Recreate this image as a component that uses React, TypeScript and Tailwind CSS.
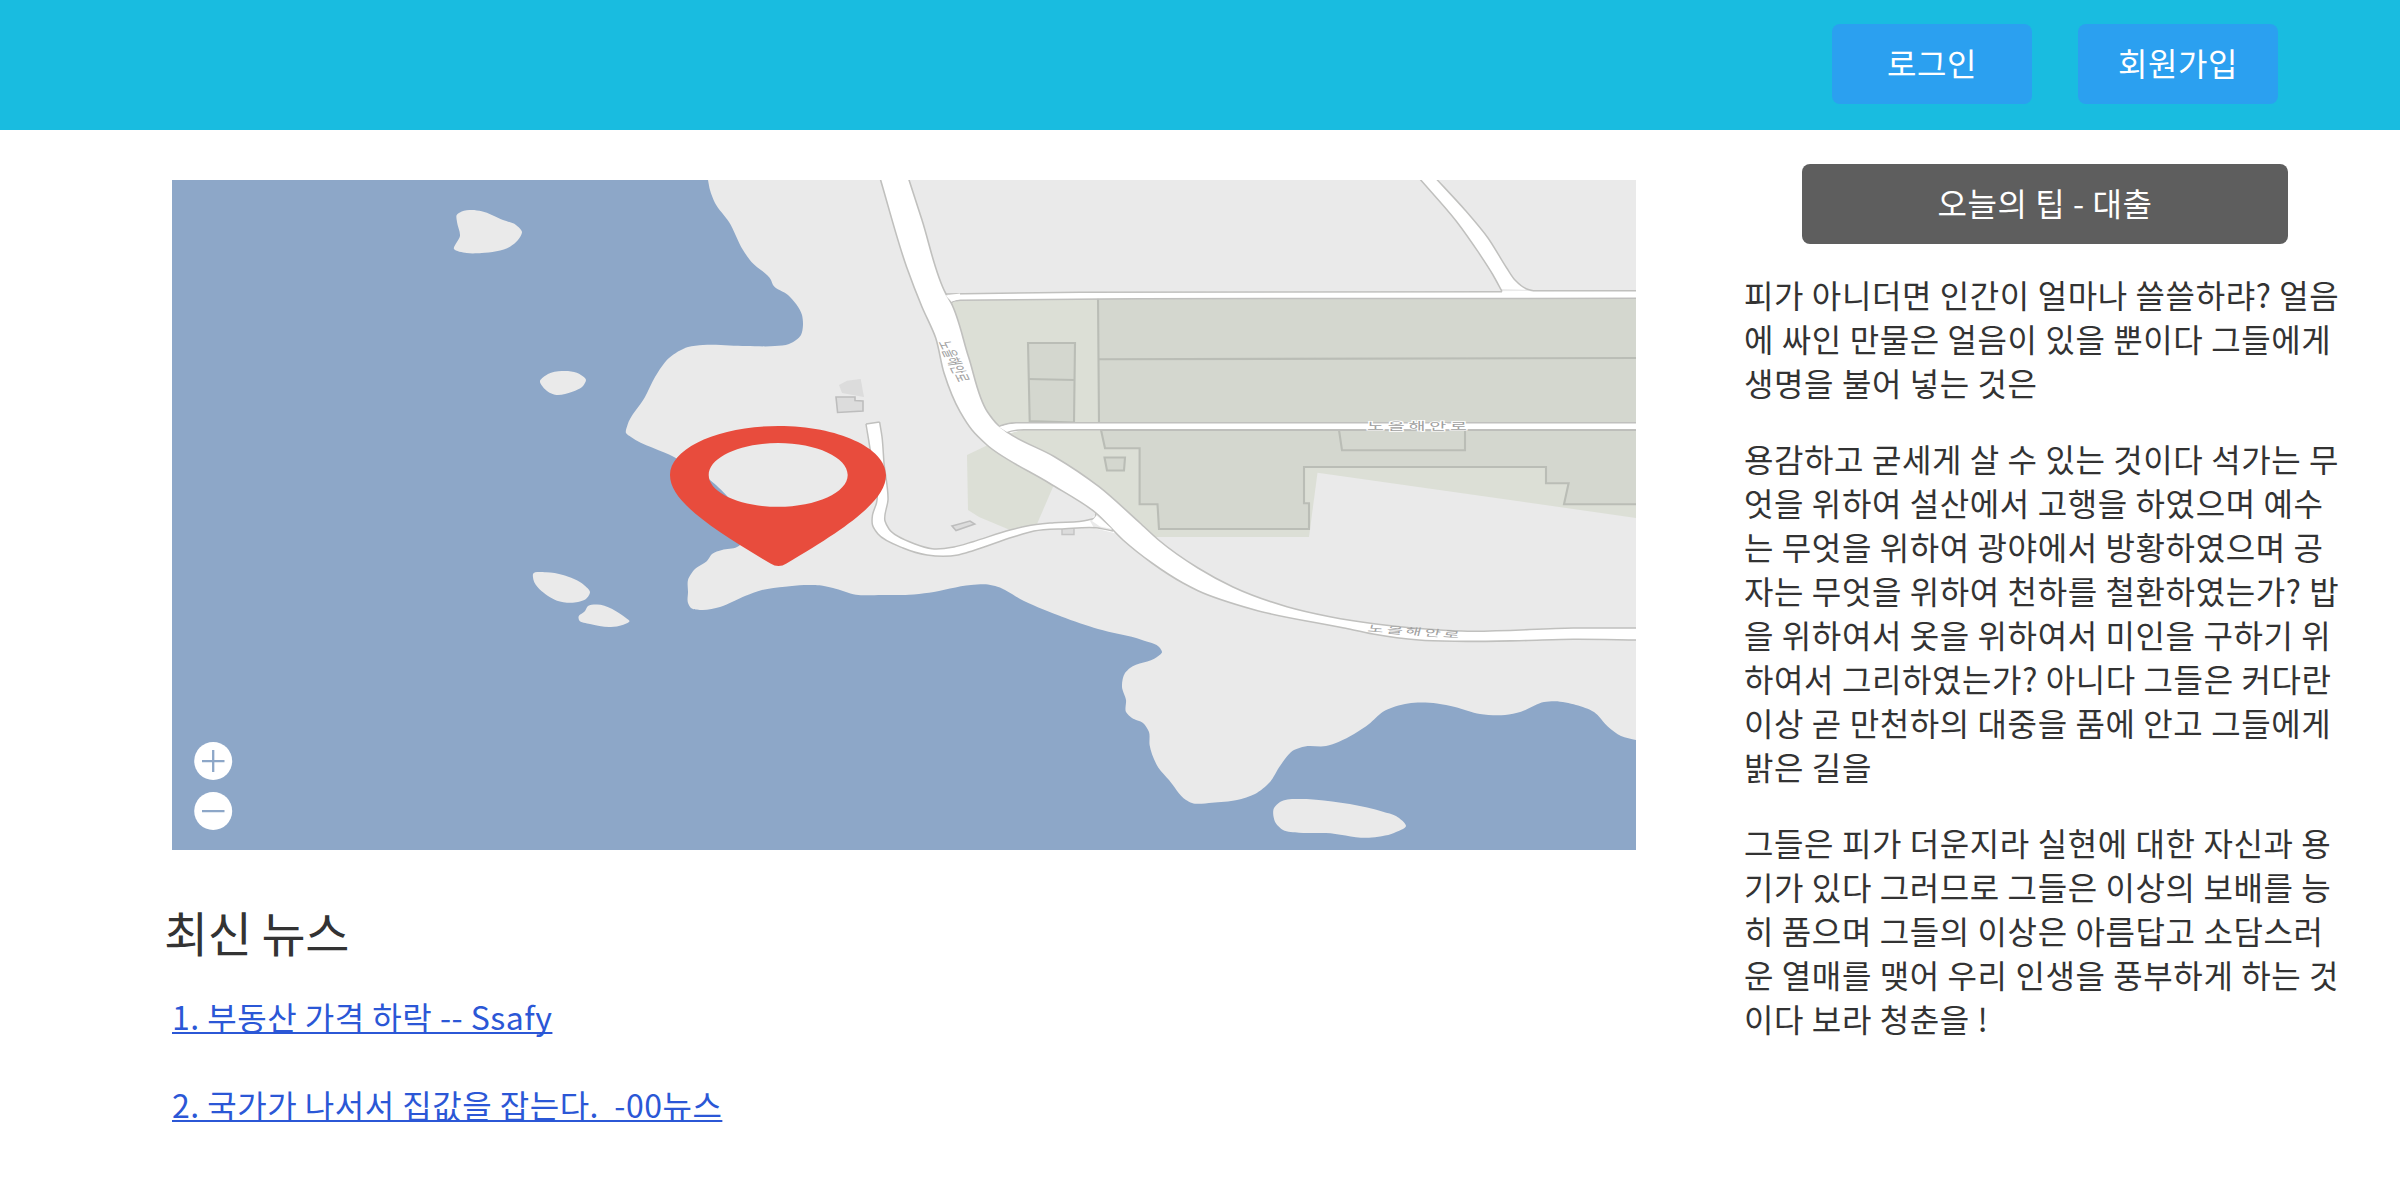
import React from "react";

type Point = [number, number];

/** Builds a smooth cubic path through the points, with tangents weighted by segment length. */
function smooth(points: Point[], closed = false): string {
  const n = points.length;
  const at = (i: number): Point =>
    closed ? points[(i + n) % n] : points[Math.max(0, Math.min(n - 1, i))];
  const dist = (p: Point, q: Point) => Math.hypot(q[0] - p[0], q[1] - p[1]);
  const tangent = (i: number): Point => {
    const a = at(i - 1);
    const b = at(i);
    const c = at(i + 1);
    const ab = dist(a, b);
    const bc = dist(b, c);
    if (!ab) return [(c[0] - b[0]) / bc, (c[1] - b[1]) / bc];
    if (!bc) return [(b[0] - a[0]) / ab, (b[1] - a[1]) / ab];
    const f = (k: 0 | 1) =>
      (((b[k] - a[k]) / ab) * bc + ((c[k] - b[k]) / bc) * ab) / (ab + bc);
    return [f(0), f(1)];
  };
  let d = `M${points[0][0]} ${points[0][1]}`;
  const last = closed ? n : n - 1;
  for (let i = 0; i < last; i++) {
    const b = at(i);
    const c = at(i + 1);
    const s = dist(b, c) / 3.4;
    const t = tangent(i);
    const u = tangent(i + 1);
    d += `C${b[0] + t[0] * s} ${b[1] + t[1] * s} ${c[0] - u[0] * s} ${c[1] - u[1] * s} ${c[0]} ${c[1]}`;
  }
  return closed ? d + "Z" : d;
}

/** Joins two road edges into one closed outline. */
function band(a: Point[], b: Point[]): string {
  return smooth(a) + smooth([...b].reverse()).replace("M", "L") + "Z";
}

const coast: Point[] = [
  [708, 180], [710, 190], [715, 203], [729, 222], [743, 250], [751.5, 262], [771, 280], [773, 285],
  [788, 295], [802, 315], [803, 325], [801, 335], [789, 344], [775, 346], [746, 346], [703, 345],
  [688, 347], [669, 358], [655, 377], [645, 397], [627.5, 425], [626, 433], [631, 437], [674, 457],
  [710, 480], [727, 496], [742, 520], [745, 540], [737, 547], [722, 550], [712, 554], [707, 561],
  [695, 569], [688, 580], [688, 592], [688, 603], [691, 608], [701, 610], [720, 607], [745, 596], [762, 590],
  [785, 586.7], [804, 585], [819.6, 585.3], [833, 588], [856, 594.7], [882, 595], [909, 594.7],
  [929, 592.7], [971, 585], [988, 584.5], [997.5, 586.7], [1024, 601], [1062, 616.7], [1098, 629],
  [1142, 640], [1160, 648], [1162, 652], [1157, 657], [1130, 668], [1125, 673], [1122, 687],
  [1126, 700], [1126, 712], [1132, 718], [1143, 723], [1149, 732], [1149.6, 745], [1158.6, 768],
  [1169, 780], [1186, 800], [1192, 803], [1212, 802.7], [1237, 800], [1255, 794], [1270, 782],
  [1280, 766], [1294, 750], [1305, 746.5], [1326, 746], [1339, 741.7], [1369, 724], [1383, 711.7],
  [1408, 703.5], [1437, 703.5], [1455, 707], [1480, 714], [1505, 715], [1521, 711.7], [1544, 702],
  [1555, 701.3], [1576, 705], [1594, 712], [1608, 726.7], [1621, 736], [1636, 740],
];

const islands: Point[][] = [
  [[456.7, 215], [461.7, 211.5], [471.7, 210], [481.7, 211.3], [503, 220], [516, 225], [522, 232], [518, 240], [510, 246.7], [481.7, 253], [466.7, 253], [454, 249], [460, 235.7], [457, 222]],
  [[540, 381], [548, 374], [561.7, 371], [576.7, 372.7], [586, 380], [583, 386], [571.7, 392], [555, 394.7], [548, 391.7]],
  [[533, 574], [546, 572.3], [563, 575], [584, 585], [590, 592], [586, 599], [578, 602], [557, 600.7], [548, 596], [533.5, 580]],
  [[578.5, 617], [585, 611], [588, 606], [595.7, 604.5], [626, 618], [629.5, 621], [622.5, 625], [611, 627], [590, 624], [579, 620]],
  [[1274, 808], [1280, 802], [1303, 799], [1316, 799.7], [1383, 811.7], [1396, 816], [1406, 826], [1394, 833], [1369, 837.7], [1326, 833], [1299, 832.7], [1283, 830], [1275.7, 823]],
];

const mainLower: Point[] = [
  [880, 178], [906.5, 266.7], [922, 307], [935.7, 338], [944, 373], [960, 411.7], [972, 430], [987, 445],
  [1049, 483], [1096, 513], [1123, 540], [1183, 583], [1198, 590.7], [1255, 610], [1344, 628],
  [1373, 634], [1419, 640], [1455, 641.3], [1519, 640.7], [1573, 639.3], [1638, 640],
];
const mainUpper: Point[] = [
  [908.4, 178], [922, 220], [946, 294], [951, 302.7], [968.5, 356.7], [987.4, 411.7], [998, 425],
  [1008, 432.7], [1054.5, 456.7], [1099, 486.7], [1140, 523], [1158.6, 540], [1198, 568],
  [1233, 587], [1287, 606.7], [1330, 616.7], [1376, 624], [1423, 628.7], [1462, 631],
  [1573, 628], [1638, 628],
];

const laneLeft: Point[] = [
  [866, 424], [871, 455], [876.5, 503], [872.5, 515], [872.5, 525], [878, 534], [903, 548], [927, 555],
  [958, 555], [973, 550.7], [1013, 537], [1034, 531], [1065, 528.7], [1096, 527.7], [1113, 531],
];
const laneRight: Point[] = [
  [879.6, 422], [882, 436.7], [884, 463], [888, 500], [885, 521], [889, 529], [915, 544],
  [932, 548.7], [954, 547], [973, 541.7], [1010, 530], [1027, 526], [1054, 522.7], [1088, 520],
  [1095, 517.5], [1096, 513],
];

const diagLeft: Point[] = [[1419, 178], [1456.7, 221.7], [1478, 251.7], [1493, 275], [1502, 291.5]];
const diagRight: Point[] = [[1435.5, 178], [1465, 210], [1488, 238], [1506.7, 268], [1515, 280], [1526.7, 289], [1533, 290.7]];

const PARAGRAPHS: string[][] = [
  ["피가 아니더면 인간이 얼마나 쓸쓸하랴? 얼음", "에 싸인 만물은 얼음이 있을 뿐이다 그들에게", "생명을 불어 넣는 것은"],
  [
    "용감하고 굳세게 살 수 있는 것이다 석가는 무",
    "엇을 위하여 설산에서 고행을 하였으며 예수",
    "는 무엇을 위하여 광야에서 방황하였으며 공",
    "자는 무엇을 위하여 천하를 철환하였는가? 밥",
    "을 위하여서 옷을 위하여서 미인을 구하기 위",
    "하여서 그리하였는가? 아니다 그들은 커다란",
    "이상 곧 만천하의 대중을 품에 안고 그들에게",
    "밝은 길을",
  ],
  [
    "그들은 피가 더운지라 실현에 대한 자신과 용",
    "기가 있다 그러므로 그들은 이상의 보배를 능",
    "히 품으며 그들의 이상은 아름답고 소담스러",
    "운 열매를 맺어 우리 인생을 풍부하게 하는 것",
    "이다 보라 청춘을 !",
  ],
];

function MapView() {
  return (
    <svg className="block h-[670px] w-[1464px]" viewBox="172 180 1464 670">
      <rect x="172" y="180" width="1464" height="670" fill="#8da7c8" />
      <path d={smooth(coast) + "L1636 180Z"} fill="#eaeaea" />
      {islands.map((p, i) => (
        <path key={i} d={smooth(p, true)} fill="#eaeaea" />
      ))}

      {/* green lots */}
      <g fill="#dcdfd6">
        <path d="M945 298H1640V425H990Z" />
        <path d="M1000 430H1640V518.5L1317.5 472.7L1309 537H1150Z" />
        <path d="M990 444L967 455L968 510L979 517L1010 530L1037 524L1056 480Z" />
      </g>

      {/* buildings */}
      <g fill="#d4d7cf" stroke="#babdb6" strokeWidth="2.1">
        <path d="M1098 297H1640V424H1099Z" />
        <path d="M1098 359.3L1640 358" />
        <path d="M1028 343H1075L1074 422.5L1029.7 421Z" />
        <path d="M1028 379L1075 380" />
        <path d="M1101 430L1105 448.3H1139.6V504.3H1157.5L1159 529H1309V503.3H1304V467H1546V483.3H1568.6L1564 504.3H1640V430Z" />
        <path d="M1339 430L1342 450.3H1465V430Z" />
        <path d="M1104.5 457.5H1125L1124 470.5H1107Z" />
      </g>
      <g fill="#dcdcdc">
        <path d="M839 385L847 380.7L860.7 379L864 397L842 393Z" />
        <path d="M836 397H855V400.5L863 401V411L837.6 412.5Z" stroke="#bdbdbd" strokeWidth="1.6" />
        <path d="M952 526L970 521L974.7 524L956 530.5Z" stroke="#bdbdbd" strokeWidth="1.6" />
        <path d="M1062 528H1074V534.5H1062Z" stroke="#c4c4c4" strokeWidth="1.4" />
      </g>

      {/* side roads */}
      <path d="M938 294L1080 292.3L1640 291V298L1140 298.3L960 300L951 303Z" fill="#fff" />
      <path d={band(diagLeft, diagRight) + "M1501 289L1530 290V294H1501Z"} fill="#fff" />
      <path d="M996 427L1013 422.7H1640V430H1022L1007 434Z" fill="#fff" />
      <path d={band(laneLeft, laneRight) + "M1090 521L1098 511L1118 534L1094 528Z"} fill="#fff" />
      <g fill="none" stroke="#c0c0be" strokeWidth="1.5">
        <path d="M946 294L1080 292.2L1502 291.7M1533 290.7H1640" />
        <path d="M951 304Q951 301 960 300.3L1140 298.7L1640 298.3" />
        <path d={smooth(diagLeft)} />
        <path d={smooth(diagRight)} />
        <path d="M1000 426Q1007 423 1016 422.7H1640" />
        <path d="M1006 433Q1013 430 1024 429.7H1640" />
        <path d="M866 424L879.6 422" />
        <path d={smooth(laneLeft)} />
        <path d={smooth(laneRight)} />
      </g>

      {/* main road */}
      <path d={band(mainLower, mainUpper)} fill="#fff" />
      <g fill="none" stroke="#c0c0be" strokeWidth="1.6">
        <path d={smooth(mainLower)} />
        <path d={smooth(mainUpper)} />
      </g>
      <path d="M945.5 295.5L960 293.5V299L951.5 301.5Z" fill="#fff" />
      <path d="M999 427L1012 424V429L1007 432Z" fill="#fff" />
      <path d="M1096.5 515.5L1112 529L1100 526.5L1092 521Z" fill="#fff" />

      {/* road names */}
      <g fill="#a0a0a0" fontFamily='"Noto Sans CJK KR", sans-serif' letterSpacing="0">
        <text transform="translate(1367 429.5) scale(1.85 1)" fontSize="10" textLength="54" stroke="#fff" strokeWidth="1.6" paintOrder="stroke">노을해안로</text>
        <text transform="translate(1367 631.5) scale(1.85 1) rotate(8)" fontSize="9.5" textLength="50">노을해안로</text>
        <text transform="translate(938 342) scale(1.85 1) rotate(75)" fontSize="9" textLength="42">노을해안로</text>
      </g>

      {/* location pin */}
      <path
        d="M778.5 426C838 426 886 448 886 475C886 500 850 526 786.5 563.5Q778.5 568.5 770.5 563.5C707 526 670 500 670 475C670 448 719 426 778.5 426ZM778.2 443C740 443 708.7 457.3 708.7 475S740 506.8 778.2 506.8S847.7 492.5 847.7 475S816.5 443 778.2 443Z"
        fill="#e84c3d"
        fillRule="evenodd"
      />

      {/* zoom controls */}
      <circle cx="213.2" cy="761" r="19" fill="#fff" />
      <circle cx="213.2" cy="811" r="19" fill="#fff" />
      <path d="M202 761.2H224.5M213.2 750V772M202 811.2H224.5" stroke="#8da7c8" strokeWidth="2.3" />
    </svg>
  );
}

export default function App() {
  return (
    <div className="h-[1200px] w-[2400px] overflow-hidden bg-white font-['Noto_Sans_CJK_KR',sans-serif] text-[32px] tracking-[0.6px] text-[#333333]">
      <header className="flex h-[130px] items-start justify-end gap-[46px] bg-[#19bce0] pt-6 pr-[122px] text-white">
        <button className="h-20 w-[200px] rounded-lg bg-[#2ba0f0] pb-[5px]">로그인</button>
        <button className="h-20 w-[200px] rounded-lg bg-[#2ba0f0] pb-[5px]">회원가입</button>
      </header>
      <div className="flex">
        <main className="ml-[172px] w-[1464px] pt-[50px]">
          <MapView />
          <h1 className="mt-[45px] -ml-2 text-[48px] leading-[72px] tracking-[-0.5px]">최신 뉴스</h1>
          <ul className="mt-[27px] flex flex-col items-start gap-[44px] leading-[44px] tracking-[0.5px] text-[#2b57d6]">
            <li>
              <a className="whitespace-pre underline decoration-2 underline-offset-[2px] [text-decoration-skip-ink:none]">1. 부동산 가격 하락 -- Ssafy</a>
            </li>
            <li>
              <a className="whitespace-pre underline decoration-2 underline-offset-[2px] [text-decoration-skip-ink:none]">2. 국가가 나서서 집값을 잡는다.  -00뉴스</a>
            </li>
          </ul>
        </main>
        <aside className="ml-[108px] w-[602px] pt-[34px]">
          <div className="ml-[58px] flex h-20 w-[486px] items-center justify-center rounded-lg bg-[#5e5e5e] pb-[5px] text-white">
            오늘의 팁 - 대출
          </div>
          <div className="mt-[28px] flex flex-col gap-8 leading-[44px]">
            {PARAGRAPHS.map((lines, i) => (
              <p key={i} className="whitespace-nowrap">
                {lines.map((line) => (
                  <span key={line} className="block">{line}</span>
                ))}
              </p>
            ))}
          </div>
        </aside>
      </div>
    </div>
  );
}
